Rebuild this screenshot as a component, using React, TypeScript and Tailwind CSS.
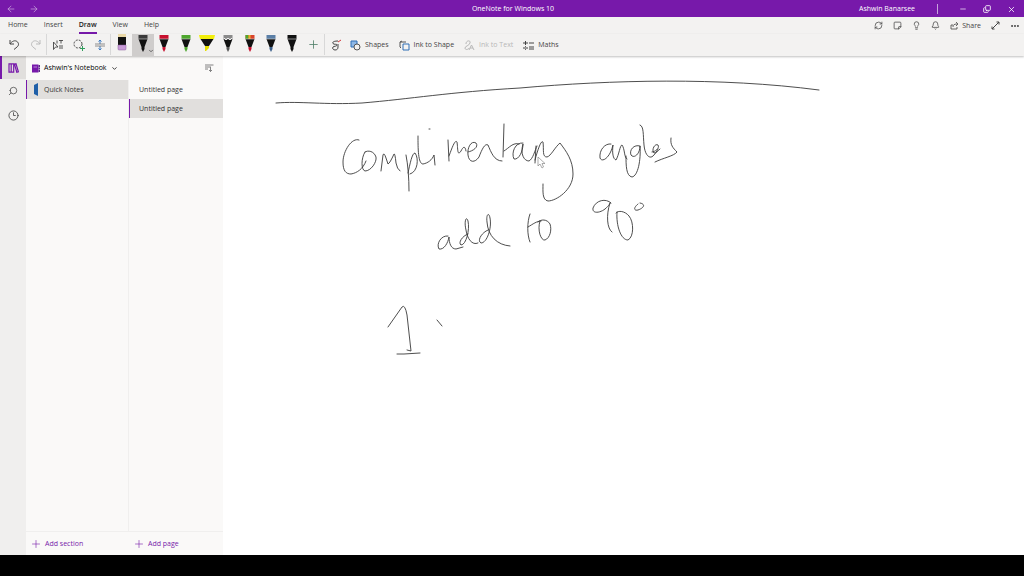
import type { ReactNode } from 'react';
import {
  ArrowLeft,
  ArrowRight,
  Bell,
  ChevronDown,
  Clock3,
  Copy,
  Ellipsis,
  Lightbulb,
  Minus,
  Plus,
  RefreshCw,
  Search,
  StickyNote,
  X,
} from 'lucide-react';

const tabs = ['Home', 'Insert', 'Draw', 'View', 'Help'];

const pens = [
  { name: 'Black pen', cap: '#3a3a3a', tip: '#111111', selected: true },
  { name: 'Red pen', cap: '#c8102e', tip: '#c8102e' },
  { name: 'Green pen', cap: '#4ea72e', tip: '#4ea72e' },
  { name: 'Yellow highlighter', cap: '#f2ee0c', tip: '#e6e000', wide: true },
  { name: 'Silver pencil', cap: '#8a8a8a', tip: '#555555', pencil: true },
  { name: 'Rainbow pen', cap: '#d9442b', tip: '#c8102e', rainbow: true },
  { name: 'Galaxy pen', cap: '#5b7fa6', tip: '#3b5f8a' },
  { name: 'Fine black pen', cap: '#111111', tip: '#111111' },
];

type Pen = (typeof pens)[number];

// Strokes are in window coordinates, the canvas shifts them into place
const strokes = [
  // divider
  'M276 103 C300 101 325 105 362 103 C410 99 450 92 520 88 C610 80 720 77 819 90',
  // first line
  'M359 140 C352 137 343 151 343 162 C343 171 346 174 351 174 C357 173 363 169 366 161',
  'M365 152 C361 158 361 170 365 171 C371 171 377 162 376 157 C374 151 368 150 365 152',
  'M381 171 L383 155 Q384 152 386 158 L388 164 Q390 163 394 154 Q395 153 396 163 Q397 169 400 171',
  'M406 155 C408 165 409 178 409 191',
  'M408 173 C410 164 412 153 415 153 C419 158 418 172 410 174',
  'M418 136 C418 148 418 164 423 164 C428 163 432 160 434 155 L435 165',
  'M429 129 L430 129',
  'M448 140 L449 161 M449 156 C452 148 455 139 457 142 C458 148 457 157 461 151 C463 147 465 145 466 151',
  'M468 152 C473 151 479 147 476 143 C471 140 467 148 468 155 C469 163 475 163 479 157 C482 149 485 143 488 145 C491 152 494 161 502 161',
  'M504 124 L503 157 M504 151 C509 148 513 142 519 144',
  'M523 143 C515 142 511 153 514 159 C519 160 523 151 523 144 C520 154 524 161 529 161 C533 159 535 150 537 146',
  'M536 146 L535 163 M535 160 C538 149 541 140 543 142 C544 150 542 157 547 157 C551 156 555 147 560 143 C566 151 573 160 573 174 C573 190 556 201 548 201 C542 200 543 191 543 184',
  'M611 144 C605 143 599 150 600 158 C602 163 610 158 613 145 C612 153 613 159 616 160 C619 155 620 145 622 145 C625 149 624 158 627 159',
  'M640 146 C634 144 629 150 631 155 C634 159 640 154 640 146 C641 160 638 176 632 177 C626 176 626 165 626 156',
  'M640 125 C644 126 643 135 644 145 C645 156 650 159 653 156 C656 153 657 151 658 149',
  'M652 152 C655 152 660 148 658 145 C655 143 651 150 654 153 C656 153 658 151 660 149',
  'M671 138 C670 145 673 148 677 152 C674 156 663 158 655 162',
  // second line
  'M448 236 C441 235 436 244 439 249 C444 250 448 243 449 237 C449 243 451 249 456 249 L463 247',
  'M468 234 C462 236 458 243 461 245 C466 245 470 230 468 221 C466 215 464 222 466 230 C467 238 472 246 478 243',
  'M488 230 C481 233 477 241 481 243 C487 243 492 228 490 218 C489 212 486 214 487 222 C488 236 497 245 510 246',
  'M530 214 C527 222 527 235 530 242 M528 227 C533 224 537 221 541 221',
  'M540 221 C537 230 541 241 545 240 C550 238 552 230 550 224 C547 219 541 219 538 222',
  'M611 203 C606 198 596 200 593 208 C592 214 600 213 605 209 C610 205 611 201 610 203 C606 215 607 229 612 232',
  'M617 212 C616 226 621 240 628 240 C634 237 634 222 629 216 C625 211 618 210 616 213',
  'M638 204 C633 208 634 211 638 210 C644 208 646 204 640 203',
  // third line
  'M388 327 L402 307 Q405 304 407 315 L411 351 L407 350',
  'M397 354 L404 354 L420 353',
  'M437 320 L442 326',
];

function PenIcon({ pen }: { pen: Pen }) {
  return (
    <svg width="16" height="20" viewBox="0 0 16 20" aria-hidden="true">
      {pen.wide ? (
        <>
          <path d="M0 1h16l-1 4H1z" fill={pen.cap} />
          <path d="M1.500 5h13L10 12H6z" fill="#111" />
          <path d="M6 12h4v2l-3 3H6z" fill={pen.tip} />
        </>
      ) : (
        <>
          <path d="M3.500 1h9v4h-9z" fill={pen.cap} />
          {pen.rainbow && <path d="M3.500 1h3v4h-3z" fill="#4ea72e" />}
          {pen.rainbow && <path d="M6.500 1h2v4h-2z" fill="#e8b32a" />}
          <path d="M3.500 5h9l-3 8h-3z" fill="#111" />
          <path d="M3.500 5h9" stroke="#ddd" strokeWidth="0.600" />
          {pen.pencil && <path d="M4 4l2 2 2-2 2 2 2-2" fill="none" stroke="#eee" />}
          <path d="M6.500 13h3v2L8 18l-1.500-3z" fill={pen.tip} />
        </>
      )}
    </svg>
  );
}

function Tool({ label, children }: { label: string; children: ReactNode }) {
  return (
    <button aria-label={label} className="flex h-[21px] w-[21px] shrink-0 items-center justify-center">
      {children}
    </button>
  );
}

function Divider() {
  return <span className="h-[21px] w-px shrink-0 bg-[#d8d8d8]" />;
}

function TitleBar() {
  return (
    <header className="flex h-[17px] shrink-0 items-center bg-[#7719aa] pt-px text-white">
      <div className="flex flex-1 items-center gap-[13px] pl-1.5">
        <button aria-label="Back"><ArrowLeft size={10} strokeWidth={1.5} className="opacity-70" /></button>
        <button aria-label="Forward"><ArrowRight size={10} strokeWidth={1.5} className="opacity-70" /></button>
      </div>
      <h1 className="pl-1">OneNote for Windows 10</h1>
      <div className="flex flex-1 items-center justify-end pr-2">
        <span>Ashwin Banarsee</span>
        <span className="mr-[21px] ml-[22px] h-2.5 w-px bg-white/60" />
        <div className="flex gap-4">
          <button aria-label="Minimise"><Minus size={8} /></button>
          <button aria-label="Restore"><Copy size={8} strokeWidth={2.5} className="-scale-y-100" /></button>
          <button aria-label="Close"><X size={9} /></button>
        </div>
      </div>
    </header>
  );
}

function TabBar() {
  return (
    <div className="flex h-[17px] shrink-0 items-center justify-between bg-[#f3f2f1] pr-1 pl-2">
      <nav className="flex h-full gap-4">
        {tabs.map((tab) => (
          <button
            key={tab}
            className={
              tab === 'Draw'
                ? 'border-b-2 border-[#7719aa] pt-px font-semibold text-[#222]'
                : 'border-b-2 border-transparent pt-px'
            }
          >
            {tab}
          </button>
        ))}
      </nav>
      <div className="flex items-center gap-2.5">
        <button aria-label="Sync"><RefreshCw size={9} /></button>
        <button aria-label="Feed"><StickyNote size={9} className="-scale-y-100 rotate-0" /></button>
        <button aria-label="Tell me"><Lightbulb size={9} /></button>
        <button aria-label="Notifications"><Bell size={9} /></button>
        <button className="flex items-center gap-0.5">
          <svg width="10" height="9" viewBox="0 0 10 9" fill="none" stroke="currentColor" strokeWidth="0.800" aria-hidden="true">
            <path d="M3 4H1v4h6V6M3 6c0-2 1-3 4-3M6 1l2 2-2 2" />
          </svg>
          Share
        </button>
        <button aria-label="Full screen">
          <svg width="9" height="9" viewBox="0 0 9 9" fill="none" stroke="currentColor" aria-hidden="true">
            <path d="M1 8l7-7M5.500 1H8v2.500M1 5.500V8h2.500" />
          </svg>
        </button>
        <button aria-label="More"><Ellipsis size={10} strokeWidth={3} /></button>
      </div>
    </div>
  );
}

function DrawToolbar() {
  return (
    <div className="z-10 flex h-[22px] shrink-0 bg-[#f3f2f1] pl-1 shadow-[0_1px_2px_rgba(0,0,0,0.25)]">
      <Tool label="Undo">
        <svg width="11" height="11" viewBox="0 0 11 11" fill="none" stroke="currentColor" aria-hidden="true">
          <path d="M1 1v4h4M1 5c2-3 5-4 7-2.500s2 4 0 5.500L5 10.500" />
        </svg>
      </Tool>
      <Tool label="Redo">
        <svg width="11" height="11" viewBox="0 0 11 11" fill="none" stroke="#bbb" aria-hidden="true">
          <path d="M10 1v4H6M10 5C8 2 5 1 3 2.500s-2 4 0 5.500l3 2.500" />
        </svg>
      </Tool>
      <Divider />
      <Tool label="Select objects or type text">
        <svg width="12" height="12" viewBox="0 0 12 12" fill="none" stroke="currentColor" strokeWidth="0.900" aria-hidden="true">
          <path d="M1.500 3v7.500l2-2.500h2.500zM7 1.500h4M9 1.500v3M7 7h4M7 9h4M5 1.500v3" />
        </svg>
      </Tool>
      <Tool label="Lasso select">
        <svg width="12" height="12" viewBox="0 0 12 12" fill="none" stroke="currentColor" aria-hidden="true">
          <circle cx="5" cy="5" r="4" strokeDasharray="2 1.200" />
          <path d="M9.500 7v5M7 9.500h5" stroke="#2f9e5b" />
        </svg>
      </Tool>
      <Tool label="Insert or remove extra space">
        <svg width="12" height="12" viewBox="0 0 12 12" fill="none" stroke="#3d7cc4" aria-hidden="true">
          <path d="M6 1v4M4.500 2.500L6 1l1.500 1.500M6 7v4M4.500 9.500L6 11l1.500-1.500" />
          <path d="M1 5h10M1 7h10" stroke="#777" strokeWidth="0.800" />
        </svg>
      </Tool>
      <Divider />
      <div className="grid w-[192px] shrink-0 grid-cols-9">
        <button aria-label="Eraser" className="flex justify-center">
          <svg width="10" height="18" viewBox="0 0 10 18" aria-hidden="true">
            <path d="M1 0h8v3H1z" fill="#ead9a8" />
            <path d="M1 3h8v8H1z" fill="#111" />
            <path d="M1 11h8v4q0 1-1 1H2q-1 0-1-1z" fill="#c79ad6" stroke="#8b5d9c" strokeWidth="0.500" />
          </svg>
        </button>
        {pens.map((pen) => (
          <button
            key={pen.name}
            aria-label={pen.name}
            className={pen.selected ? 'relative flex justify-center bg-[#cfcdcc]' : 'flex justify-center'}
          >
            <PenIcon pen={pen} />
            {pen.selected && <ChevronDown size={6} strokeWidth={3} className="absolute right-0 bottom-0.5" />}
          </button>
        ))}
      </div>
      <Tool label="Add pen"><Plus size={13} strokeWidth={1.5} className="text-[#4f7f68]" /></Tool>
      <Divider />
      <Tool label="Draw with mouse or touch">
        <svg width="12" height="12" viewBox="0 0 12 12" fill="none" stroke="currentColor" aria-hidden="true">
          <path d="M8 2C4 2 2 3 3 4.500s4 0 4 1.500-3 1-4 2 0 3 2 3 3-1 3-3V5" />
          <path d="M8 3l3-2" stroke="#d13438" />
        </svg>
      </Tool>
      <div className="flex items-center gap-2.5 pl-1">
        <button className="flex items-center gap-1">
          <svg width="11" height="11" viewBox="0 0 11 11" aria-hidden="true">
            <path d="M1 1h6v6H1z" fill="#8fb8e6" stroke="#2f6fb5" />
            <circle cx="7" cy="7" r="3" fill="#f3f2f1" stroke="#555" />
          </svg>
          Shapes
        </button>
        <button className="flex items-center gap-1">
          <svg width="11" height="11" viewBox="0 0 11 11" fill="none" stroke="#555" aria-hidden="true">
            <path d="M3 1L1 2v5l1 1M1 2h6" />
            <path d="M4 4h6v6H4z" fill="#f3f2f1" stroke="#2f6fb5" />
          </svg>
          Ink to Shape
        </button>
        <button disabled className="flex items-center gap-1 text-[#b8b8b8]">
          <svg width="11" height="11" viewBox="0 0 11 11" fill="none" stroke="currentColor" aria-hidden="true">
            <path d="M2 4c0-4 5-4 4-1S1 6 1 8s3 2 4 0M5 10l2.500-5L10 10M6 8h3" />
          </svg>
          Ink to Text
        </button>
        <button className="flex items-center gap-1">
          <svg width="11" height="11" viewBox="0 0 11 11" fill="none" stroke="currentColor" aria-hidden="true">
            <path d="M0 3h5M2.500 1v4M6 3h5M0 8h5M6 7h5M6 9h5M2.500 6v.8M2.500 9.200v.8" />
          </svg>
          Maths
        </button>
      </div>
    </div>
  );
}

function NavRail() {
  return (
    <nav className="flex w-[26px] shrink-0 flex-col bg-[#f0efee]">
      <button aria-label="Notebooks" className="flex h-[23px] items-center border-l-2 border-[#7719aa] bg-[#e1dfdd] pl-1.5">
        <svg width="11" height="10" viewBox="0 0 11 10" fill="none" stroke="#7719aa" strokeWidth="1.200" aria-hidden="true">
          <path d="M1 .8h2.200v8.400H1zM3.200.8h2.500v8.400H3.200zM6.500 1.200l1.500-.4 2.400 8-1.600.4z" />
        </svg>
      </button>
      <button aria-label="Search" className="flex h-6 items-center justify-center">
        <Search size={10} strokeWidth={1.8} className="-scale-x-100" />
      </button>
      <button aria-label="Recent" className="flex h-6 items-center justify-center">
        <Clock3 size={11} strokeWidth={1.8} />
      </button>
    </nav>
  );
}

function NotebookPane() {
  return (
    <aside className="flex w-[197px] shrink-0 flex-col bg-[#faf9f8] text-[#333]">
      <div className="flex h-6 shrink-0 items-center justify-between pr-[9px] pl-[5px]">
        <button className="flex items-center gap-1 font-medium text-black">
          <svg width="9" height="9" viewBox="0 0 9 9" aria-hidden="true">
            <path d="M1 .5h6.500v8H1z" fill="#7719aa" />
            <path d="M7.500 1H9v2H7.500zM7.500 3.500H9v2H7.500zM7.500 6H9v2H7.500z" fill="#5b2a86" />
            <path d="M2.500 3h3.500" stroke="#d9bde8" strokeWidth="0.700" />
          </svg>
          Ashwin&apos;s Notebook
          <ChevronDown size={7} strokeWidth={2.5} />
        </button>
        <button aria-label="Sort pages">
          <svg width="9" height="8" viewBox="0 0 9 8" fill="none" stroke="#666" strokeWidth="0.800" aria-hidden="true">
            <path d="M0 1h8.500M0 3h5M0 5h3M5.500 2.500v5M4 6l1.500 1.500L7 6" />
          </svg>
        </button>
      </div>
      <div className="flex min-h-0 flex-1">
        <ul className="w-[103px] border-r border-[#f0efee]">
          <li>
            <button className="flex h-[19px] w-full items-center gap-1.5 border-l border-[#7719aa] bg-[#e1dfdd] pl-[7px]">
              <svg width="4" height="13" viewBox="0 0 4 13" aria-hidden="true">
                <path d="M4 0v13L0 11V2z" fill="#1f5fa8" />
              </svg>
              Quick Notes
            </button>
          </li>
        </ul>
        <ul className="flex-1">
          <li>
            <button className="flex h-[19px] w-full items-center border-l border-transparent pl-[9px]">Untitled page</button>
          </li>
          <li>
            <button className="flex h-[19px] w-full items-center border-l border-[#7719aa] bg-[#e1dfdd] pl-[9px]">Untitled page</button>
          </li>
        </ul>
      </div>
      <div className="flex h-6 shrink-0 items-center border-t border-[#f0efee] font-medium text-[#7719aa]">
        <button className="flex w-[103px] items-center gap-[3px] pl-1">
          <Plus size={12} strokeWidth={1.2} />
          Add section
        </button>
        <button className="flex items-center gap-[3px] pl-1">
          <Plus size={12} strokeWidth={1.2} />
          Add page
        </button>
      </div>
    </aside>
  );
}

function InkCanvas() {
  return (
    <section className="min-w-0 flex-1 bg-white">
      <svg className="h-full w-full" role="img" aria-label="Complimentary angles add to 90°">
        <g transform="translate(-223 -56)">
          <g fill="none" stroke="#3a3a3a" strokeWidth="0.900" strokeLinecap="round" strokeLinejoin="round">
            {strokes.map((d) => (
              <path key={d} d={d} />
            ))}
          </g>
          <path d="M538 157v9l2-2 2 4 1.500-1-1.500-3.500h3z" fill="#fff" stroke="#888" strokeWidth="0.700" />
        </g>
      </svg>
    </section>
  );
}

export default function App() {
  return (
    <div className="flex h-screen flex-col overflow-hidden bg-white font-['Open_Sans','Noto_Sans',sans-serif] text-[7px] leading-[10px] text-[#444]">
      <TitleBar />
      <TabBar />
      <DrawToolbar />
      <main className="flex min-h-0 flex-1">
        <NavRail />
        <NotebookPane />
        <InkCanvas />
      </main>
      <footer className="h-[21px] shrink-0 bg-black" />
    </div>
  );
}
